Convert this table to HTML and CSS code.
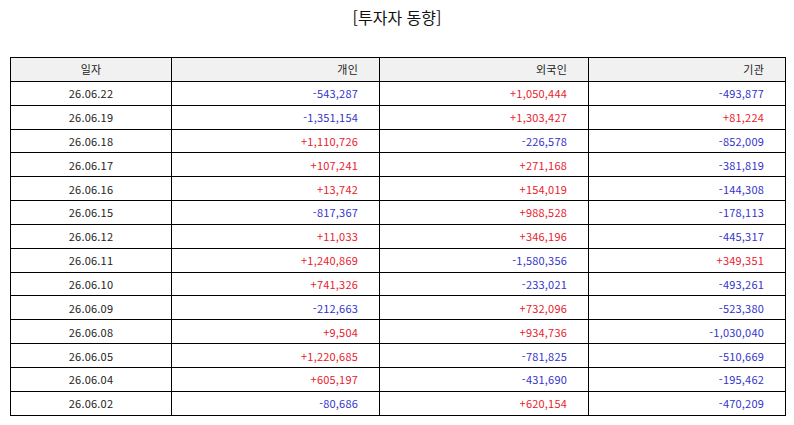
FILE: index.html
```html
<!DOCTYPE html>
<html lang="ko">
<head>
<meta charset="utf-8">
<link rel="stylesheet" href="styles.css">
</head>
<body>
<h1 class="title">[투자자 동향]</h1>
<table class="grid">
<colgroup><col class="c1"><col class="c2"><col class="c3"><col class="c4"></colgroup>
<thead>
<tr><th class="center">일자</th><th>개인</th><th>외국인</th><th>기관</th></tr>
</thead>
<tbody>
<tr><td class="center">26.06.22</td><td class="dn">-543,287</td><td class="up">+1,050,444</td><td class="dn">-493,877</td></tr>
<tr><td class="center">26.06.19</td><td class="dn">-1,351,154</td><td class="up">+1,303,427</td><td class="up">+81,224</td></tr>
<tr><td class="center">26.06.18</td><td class="up">+1,110,726</td><td class="dn">-226,578</td><td class="dn">-852,009</td></tr>
<tr><td class="center">26.06.17</td><td class="up">+107,241</td><td class="up">+271,168</td><td class="dn">-381,819</td></tr>
<tr><td class="center">26.06.16</td><td class="up">+13,742</td><td class="up">+154,019</td><td class="dn">-144,308</td></tr>
<tr><td class="center">26.06.15</td><td class="dn">-817,367</td><td class="up">+988,528</td><td class="dn">-178,113</td></tr>
<tr><td class="center">26.06.12</td><td class="up">+11,033</td><td class="up">+346,196</td><td class="dn">-445,317</td></tr>
<tr><td class="center">26.06.11</td><td class="up">+1,240,869</td><td class="dn">-1,580,356</td><td class="up">+349,351</td></tr>
<tr><td class="center">26.06.10</td><td class="up">+741,326</td><td class="dn">-233,021</td><td class="dn">-493,261</td></tr>
<tr><td class="center">26.06.09</td><td class="dn">-212,663</td><td class="up">+732,096</td><td class="dn">-523,380</td></tr>
<tr><td class="center">26.06.08</td><td class="up">+9,504</td><td class="up">+934,736</td><td class="dn">-1,030,040</td></tr>
<tr><td class="center">26.06.05</td><td class="up">+1,220,685</td><td class="dn">-781,825</td><td class="dn">-510,669</td></tr>
<tr><td class="center">26.06.04</td><td class="up">+605,197</td><td class="dn">-431,690</td><td class="dn">-195,462</td></tr>
<tr><td class="center">26.06.02</td><td class="dn">-80,686</td><td class="up">+620,154</td><td class="dn">-470,209</td></tr>
</tbody>
</table>
</body>
</html>
```
FILE: styles.css
```css
html, body {
  margin: 0;
  padding: 0;
  background: #ffffff;
  font-family: "Noto Sans CJK KR", "Noto Sans", sans-serif;
  color: #222222;
}
.title {
  margin: 0;
  padding-top: 6px;
  height: 57px;
  box-sizing: border-box;
  text-align: center;
  font-size: 16px;
  font-weight: normal;
  line-height: 22px;
  color: #111111;
}
.grid {
  margin-left: 10px;
  width: 775px;
  border-collapse: collapse;
  table-layout: fixed;
  font-size: 11px;
  letter-spacing: 0.2px;
}
.c1 { width: 161px; }
.c2 { width: 208px; }
.c3 { width: 209px; }
.c4 { width: 197px; }
.grid th, .grid td {
  border: 1px solid #000000;
  height: 23.85px;
  padding: 0 21px 0 4px;
  text-align: right;
  line-height: 14px;
  box-sizing: border-box;
}
.grid th {
  background: #f1f1f1;
  font-weight: normal;
  color: #222222;
}
.grid .center {
  text-align: center;
  padding: 0;
}
.up { color: #e8212c; }
.dn { color: #3333cc; }
```
